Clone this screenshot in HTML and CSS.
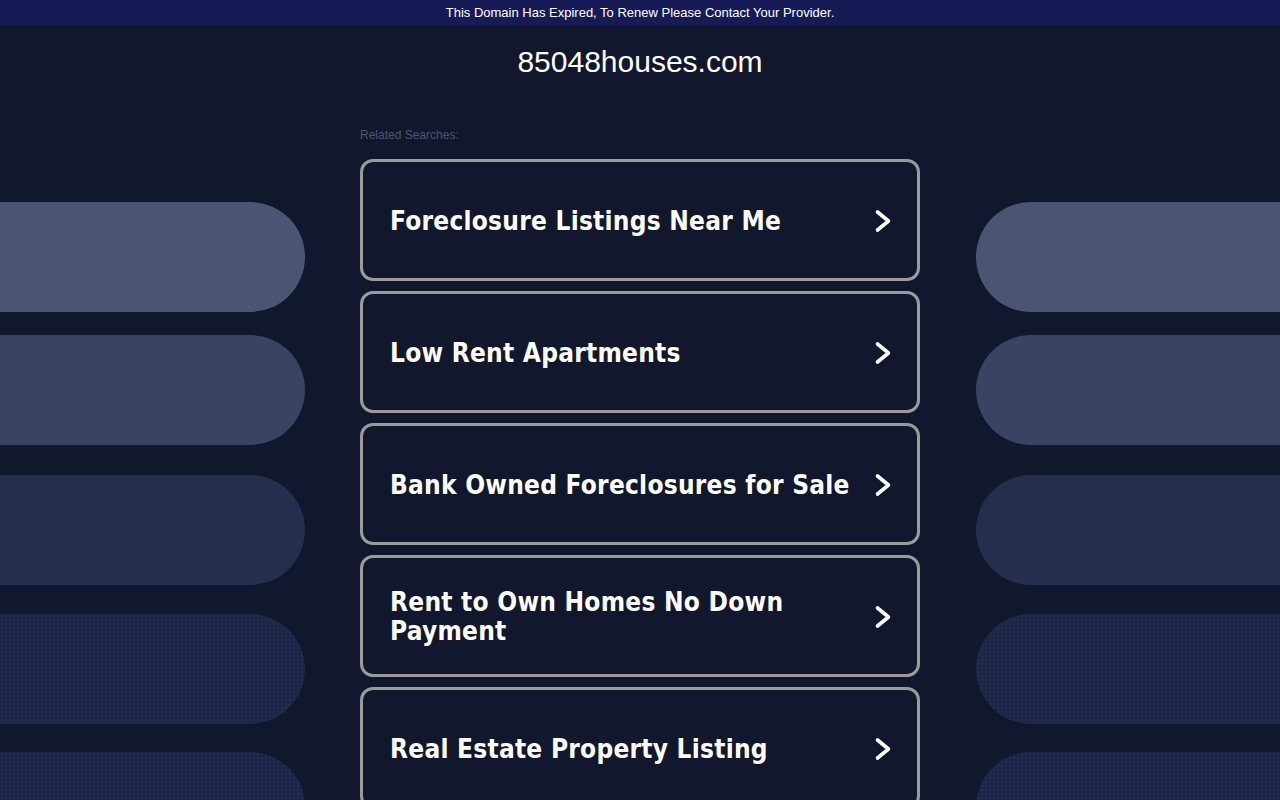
FILE: index.html
```html
<!DOCTYPE html>
<html lang="en">
<head>
<meta charset="utf-8">
<title>85048houses.com</title>
<link rel="stylesheet" href="styles.css">
</head>
<body>
<div class="notice">This Domain Has Expired, To Renew Please Contact Your Provider.</div>
<div class="layout">
  <div class="side side-left">
    <div class="pill p1"></div>
    <div class="pill p2"></div>
    <div class="pill p3"></div>
    <div class="pill p4"></div>
    <div class="pill p5"></div>
  </div>
  <main class="center">
    <h1 class="domain">85048houses.com</h1>
    <div class="related">Related Searches:</div>
    <div class="cards">
      <a class="card" href="#"><span class="card-text">Foreclosure Listings Near Me</span><svg class="chev" viewBox="0 0 18 26" width="18" height="26"><path d="M3.5 4 L14.5 13 L3.5 22"/></svg></a>
      <a class="card" href="#"><span class="card-text">Low Rent Apartments</span><svg class="chev" viewBox="0 0 18 26" width="18" height="26"><path d="M3.5 4 L14.5 13 L3.5 22"/></svg></a>
      <a class="card" href="#"><span class="card-text">Bank Owned Foreclosures for Sale</span><svg class="chev" viewBox="0 0 18 26" width="18" height="26"><path d="M3.5 4 L14.5 13 L3.5 22"/></svg></a>
      <a class="card" href="#"><span class="card-text">Rent to Own Homes No Down Payment</span><svg class="chev" viewBox="0 0 18 26" width="18" height="26"><path d="M3.5 4 L14.5 13 L3.5 22"/></svg></a>
      <a class="card" href="#"><span class="card-text">Real Estate Property Listing</span><svg class="chev" viewBox="0 0 18 26" width="18" height="26"><path d="M3.5 4 L14.5 13 L3.5 22"/></svg></a>
    </div>
  </main>
  <div class="side side-right">
    <div class="pill p1"></div>
    <div class="pill p2"></div>
    <div class="pill p3"></div>
    <div class="pill p4"></div>
    <div class="pill p5"></div>
  </div>
</div>
</body>
</html>
```
FILE: styles.css
```css
html, body {
  margin: 0;
  padding: 0;
  background: #11172c;
}
body {
  font-family: "Liberation Sans", Arial, sans-serif;
  color: #fff;
  overflow: hidden;
}
.notice {
  height: 25px;
  background: #161b55;
  color: #fff;
  font-size: 13px;
  line-height: 25px;
  text-align: center;
}
.layout {
  display: grid;
  grid-template-columns: 1fr 560px 1fr;
  column-gap: 55px;
}
.side {
  display: flex;
  flex-direction: column;
  padding-top: 177px;
}
.pill {
  height: 110px;
  flex: none;
}
.side-left .pill { border-radius: 0 55px 55px 0; }
.side-right .pill { border-radius: 55px 0 0 55px; margin-left: 1px; }
.p1 { background: #4b5573; }
.p2 { background: #3a4361; margin-top: 23px; }
.p3 { background: #252e4c; margin-top: 30px; }
.p4 {
  margin-top: 29px;
  background-color: #1d2646;
  background-image: radial-gradient(circle, rgba(80, 95, 140, 0.18) 0.6px, transparent 0.9px);
  background-size: 4px 4px;
}
.p5 {
  margin-top: 28px;
  background-color: #1c2547;
  background-image: radial-gradient(circle, rgba(80, 95, 140, 0.3) 0.6px, transparent 0.9px);
  background-size: 4px 4px;
}
.center {
  display: flex;
  flex-direction: column;
}
.domain {
  margin: 0;
  padding-top: 20px;
  height: 34px;
  line-height: 34px;
  font-size: 30px;
  font-weight: normal;
  text-align: center;
  color: #fff;
}
.related {
  margin-top: 49px;
  font-size: 12px;
  line-height: 14px;
  color: #4b5573;
}
.cards {
  margin-top: 17px;
  display: flex;
  flex-direction: column;
  gap: 10px;
}
.card {
  box-sizing: border-box;
  height: 122px;
  border: 3px solid #9b9b9b;
  border-radius: 13px;
  display: flex;
  align-items: center;
  justify-content: space-between;
  padding: 2px 25px 0 27px;
  text-decoration: none;
  color: #fff;
}
.card-text {
  font-family: "DejaVu Sans Condensed", "DejaVu Sans", sans-serif;
  font-weight: bold;
  font-size: 26px;
  letter-spacing: 0.25px;
  line-height: 29px;
  max-width: 475px;
}
.chev {
  flex: none;
  fill: none;
  stroke: #fff;
  stroke-width: 3.6;
  stroke-linecap: round;
  stroke-linejoin: round;
}
```
